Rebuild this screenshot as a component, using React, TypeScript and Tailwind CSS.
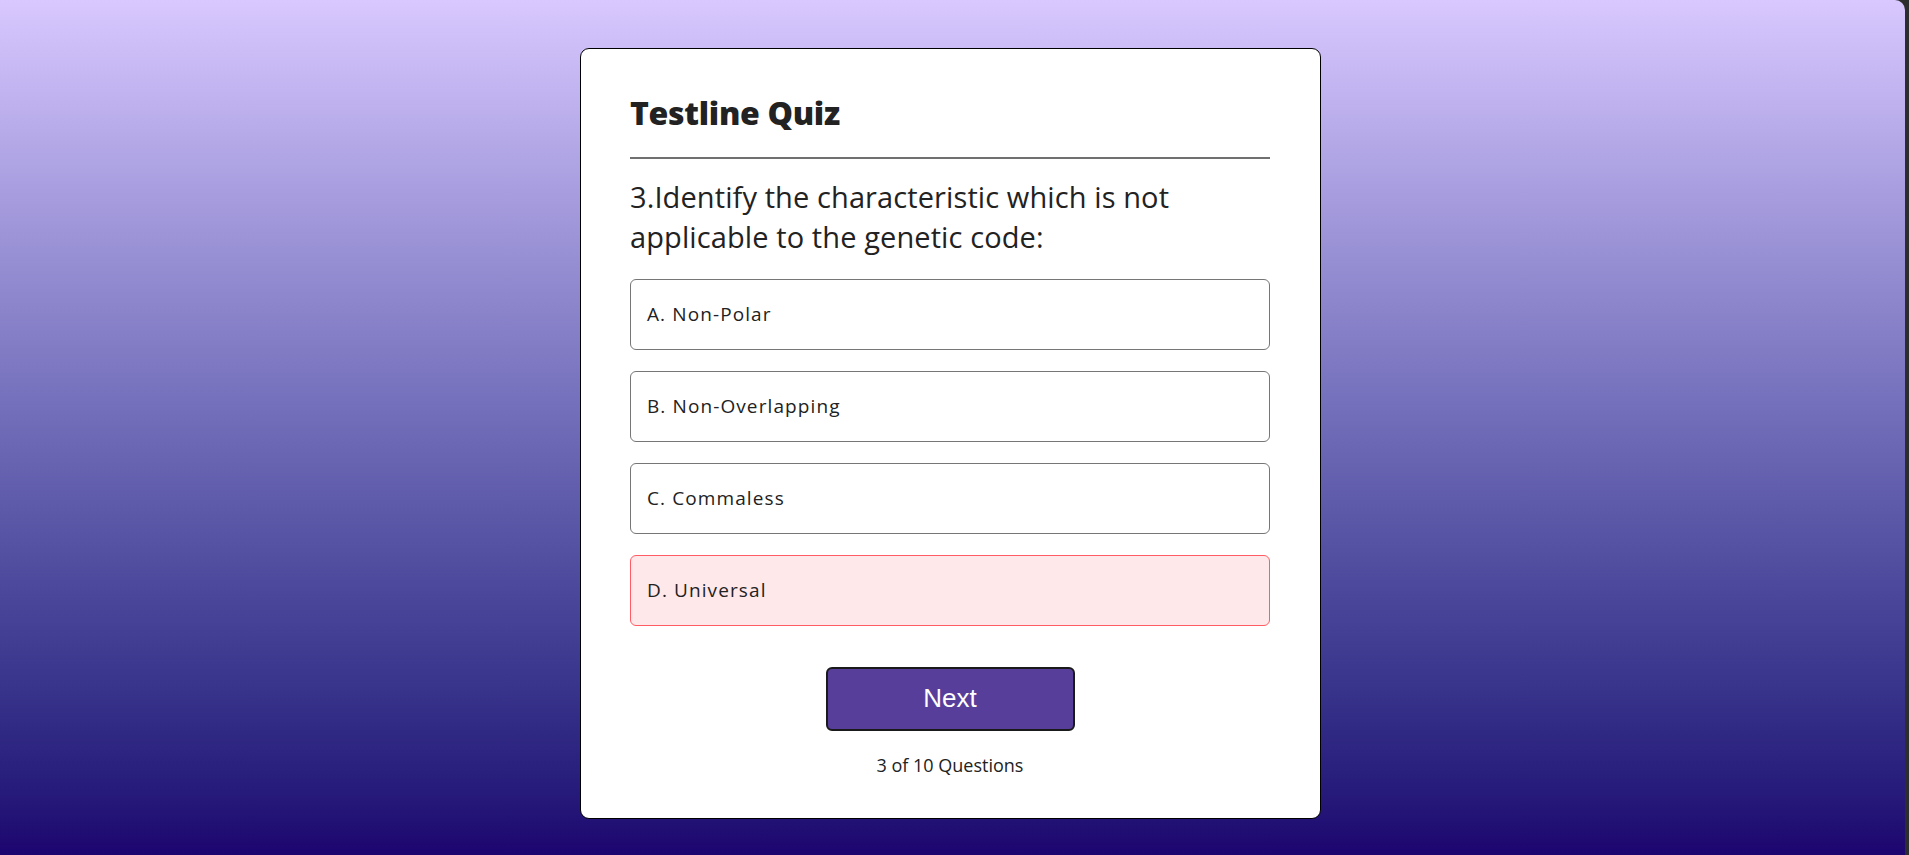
import React from "react";

const options = [
  { label: "A. Non-Polar", wrong: false },
  { label: "B. Non-Overlapping", wrong: false },
  { label: "C. Commaless", wrong: false },
  { label: "D. Universal", wrong: true },
];

export default function App() {
  return (
    <div className="w-[1909px] h-[855px] bg-[#2d2d2d] flex overflow-hidden">
      <div
        className="w-[1905px] h-[855px] rounded-tr-[10px] bg-gradient-to-b from-[#d9c8ff] to-[#1d046f] flex justify-center items-start pt-[48px] pr-[4px]"
        style={{ fontFamily: '"Open Sans", "DejaVu Sans", sans-serif' }}
      >
        <div className="w-[741px] bg-white border border-black rounded-[9px] pt-[44px] pb-[41px] pl-[49px] pr-[50px] flex flex-col">
          <h1 className="text-[32px] leading-[40px] font-extrabold tracking-[-0.3px] text-[#222]">Testline Quiz</h1>
          <div className="mt-[24px] h-[2px] bg-[#707070]" />
          <p className="mt-[18px] text-[29px] leading-[40px] font-medium tracking-[0.1px] text-[#222]">
            3.Identify the characteristic which is not applicable to the genetic code:
          </p>
          <div className="mt-[22px] flex flex-col gap-[21px]">
            {options.map((o) => (
              <div
                key={o.label}
                className={
                  o.wrong
                    ? "h-[71px] rounded-[6px] border border-[#ff5c63] bg-[#ffe8ea] flex items-center pl-[16px] pb-[2px]"
                    : "h-[71px] rounded-[6px] border border-[#767676] bg-white flex items-center pl-[16px] pb-[2px]"
                }
              >
                <span className="text-[19px] leading-[26px] tracking-[1.1px] text-[#222]">{o.label}</span>
              </div>
            ))}
          </div>
          <div className="mt-[41px] flex justify-center">
            <button
              className="w-[249px] h-[64px] rounded-[6px] border-2 border-[#1a1a1a] bg-[#563e9a] text-white text-[26px] flex items-center justify-center pb-[2px]"
              style={{ fontFamily: '"Liberation Sans", Arial, sans-serif' }}
            >
              Next
            </button>
          </div>
          <p className="mt-[22px] text-center text-[18px] leading-[24px] text-[#222]">3 of 10 Questions</p>
        </div>
      </div>
    </div>
  );
}
